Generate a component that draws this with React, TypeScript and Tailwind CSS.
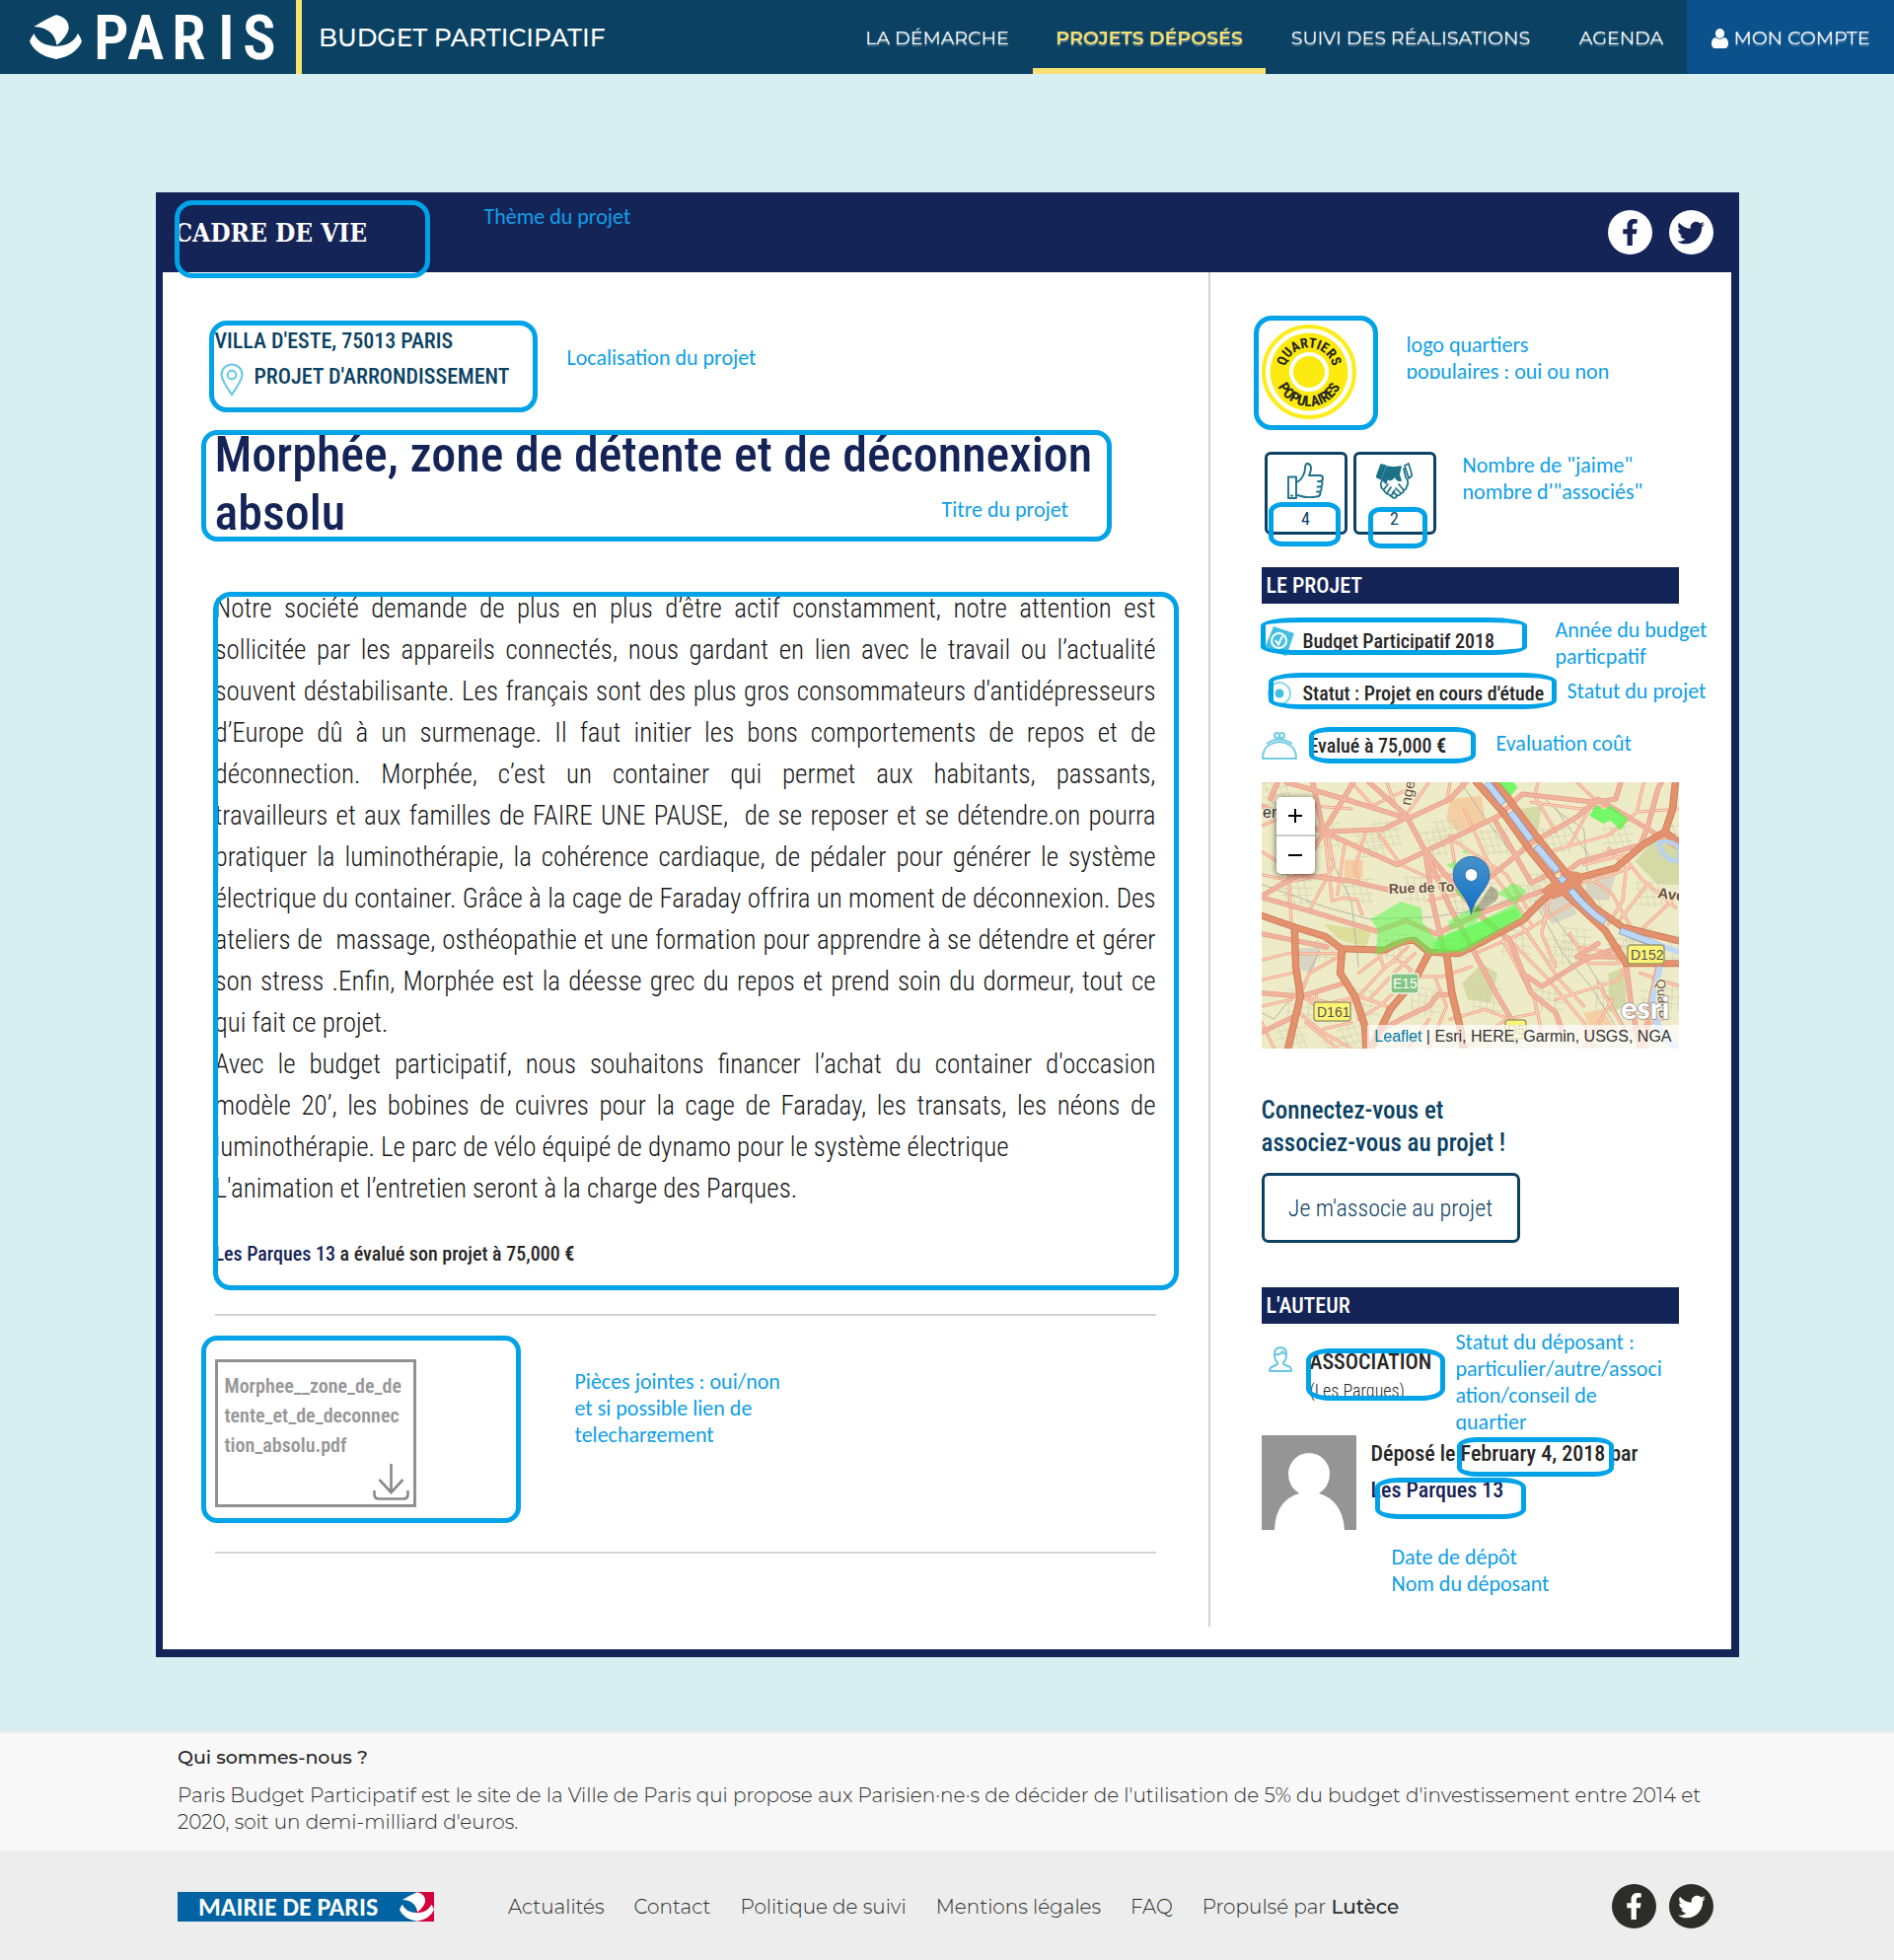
import React from "react";
import { FaFacebookF, FaTwitter } from "react-icons/fa";

const COND = "font-['Roboto_Condensed','Liberation_Sans',sans-serif]";
const MONT = "font-['Montserrat','Inter',sans-serif]";

function Mark({ className }: { className: string }) {
  return <span aria-hidden="true" className={"pointer-events-none absolute border-[5px] border-[#00a2e8] " + className} />;
}

function Note({ className, children }: { className: string; children: React.ReactNode }) {
  return (
    <div
      className={
        "absolute overflow-hidden whitespace-nowrap font-['Carlito','Lato',sans-serif] text-[22px] leading-[27px] font-normal text-[#0f9fe6] " +
        className
      }
    >
      {children}
    </div>
  );
}

function Ship({ className }: { className: string }) {
  return (
    <svg viewBox="0 0 53 45" className={className} fill="currentColor" aria-hidden="true">
      <path d="M4.5 12 Q17 4 27 0 Q40 3 39.7 14 Q38 22 27.5 31 Q25 13 4.5 12Z" />
      <path d="M4.5 19 Q9 31 27 32 Q44 31 48.8 19 Q51 21 53 27 Q47 41 27 45 Q6 41 0 27 Q2 22 4.5 19Z" />
    </svg>
  );
}

const navItems = [
  { label: "LA DÉMARCHE", width: "w-[194px]", active: false },
  { label: "PROJETS DÉPOSÉS", width: "w-[236px]", active: true },
  { label: "SUIVI DES RÉALISATIONS", width: "w-[294px]", active: false },
  { label: "AGENDA", width: "w-[133px]", active: false },
];

function Header() {
  return (
    <header className={"flex h-[75px] items-stretch bg-[#0b4263] text-white " + MONT}>
      <a href="#" className="flex items-center pl-[30px]" aria-label="Paris">
        <Ship className="h-[45px] w-[53px]" />
        <svg viewBox="0 0 200 75" className="ml-3 h-[75px] w-[200px] font-['Roboto_Condensed',sans-serif]" fill="currentColor" fontSize="63" fontWeight="600">
          <text x="0" y="60">P</text>
          <text x="34" y="60">A</text>
          <text x="79" y="60">R</text>
          <text x="126" y="60">I</text>
          <text x="151" y="60">S</text>
        </svg>
      </a>
      <div className="ml-[5px] w-[6px] bg-[#f8e073]" />
      <a href="#" className="flex items-center pt-[2px] pl-[17px] text-[25px] font-medium">BUDGET PARTICIPATIF</a>
      <nav className="ml-auto flex text-[19px] [text-shadow:0_2px_0_rgba(255,255,255,0.25)]">
        {navItems.map((n) => (
          <a
            key={n.label}
            href="#"
            className={
              "flex items-center justify-center whitespace-nowrap pt-[3px] " +
              n.width +
              (n.active ? " border-b-[6px] border-[#f8e073] pt-[9px] font-semibold text-[#f8e073]" : "")
            }
          >
            {n.label}
          </a>
        ))}
        <a href="#" className="flex w-[210px] items-center justify-center gap-[6px] bg-[#0b528c] pt-[3px]">
          <svg viewBox="0 0 17 20" className="h-5 w-[17px]" fill="currentColor" aria-hidden="true">
            <ellipse cx="8.500" cy="5" rx="4.600" ry="5" />
            <path d="M4 9 Q8.500 12.500 13 9 Q17 10 17 15 Q17 20 13 20 H4 Q0 20 0 15 Q0 10 4 9Z" />
          </svg>
          MON COMPTE
        </a>
      </nav>
    </header>
  );
}

function Social({ circle, gap }: { circle: string; gap: string }) {
  const base = "flex size-[45px] items-center justify-center rounded-full " + circle;
  return (
    <div className={"flex " + gap}>
      <a href="#" aria-label="Facebook" className={base}><FaFacebookF className="size-[27px]" /></a>
      <a href="#" aria-label="Twitter" className={base}><FaTwitter className="size-[28px]" /></a>
    </div>
  );
}

const lines: [string, boolean][] = [
  ["Notre société demande de plus en plus d’être actif constamment, notre attention est", true],
  ["sollicitée par les appareils connectés, nous gardant en lien avec le travail ou l’actualité", true],
  ["souvent déstabilisante. Les français sont des plus gros consommateurs d'antidépresseurs", true],
  ["d’Europe dû à un surmenage. Il faut initier les bons comportements de repos et de", true],
  ["déconnection. Morphée, c’est un container qui permet aux habitants, passants,", true],
  ["travailleurs et aux familles de FAIRE UNE PAUSE,\u00a0 de se reposer et se détendre.on pourra", true],
  ["pratiquer la luminothérapie, la cohérence cardiaque, de pédaler pour générer le système", true],
  ["électrique du container. Grâce à la cage de Faraday offrira un moment de déconnexion. Des", true],
  ["ateliers de\u00a0 massage, osthéopathie et une formation pour apprendre à se détendre et gérer", true],
  ["son stress .Enfin, Morphée est la déesse grec du repos et prend soin du dormeur, tout ce", true],
  ["qui fait ce projet.", false],
  ["Avec le budget participatif, nous souhaitons financer l’achat du container d'occasion", true],
  ["modèle 20’, les bobines de cuivres pour la cage de Faraday, les transats, les néons de", true],
  ["luminothérapie. Le parc de vélo équipé de dynamo pour le système électrique", false],
  ["L'animation et l’entretien seront à la charge des Parques.", false],
];

function Article() {
  return (
    <article className={"min-w-0 flex-1 px-[53px] pt-[52px] " + COND}>
      <div className="relative text-[22px] leading-9 font-medium text-[#0b4263]">
        <p>VILLA D'ESTE, 75013 PARIS</p>
        <p className="flex h-9 items-center">
          <svg viewBox="0 0 24 34" className="mt-[6px] mr-[11px] ml-[5px] h-[34px] w-6 shrink-0" fill="none" stroke="#6cc9e2" strokeWidth="2.200" aria-hidden="true">
            <path d="M12 32 Q2 18 1.500 12 A10.500 10.500 0 0 1 22.500 12 Q22 18 12 32Z" />
            <circle cx="12" cy="12" r="4.300" />
          </svg>
          PROJET D'ARRONDISSEMENT
        </p>
        <Mark className="-top-[3px] -left-[6px] h-[93px] w-[333px] rounded-[18px]" />
        <Note className="top-[21px] left-[357px]">Localisation du projet</Note>
      </div>

      <div className="relative mt-8">
        <h1 className="text-[50px] leading-[59px] font-medium text-[#152457]">Morphée, zone de détente et de déconnexion<br />absolu</h1>
        <Mark className="top-1 -left-[14px] h-[113px] w-[923px] rounded-[16px]" />
        <Note className="top-[71px] left-[737px]">Titre du projet</Note>
      </div>

      <div className="relative mt-[46px]">
        <div className="text-[27px] leading-[42px] font-light text-[#161616]">
          {lines.map(([t, full]) => (
            <span key={t} className={full ? "block [text-align-last:justify]" : "block"}>{t}</span>
          ))}
        </div>
        <p className="mt-[30px] text-[20px] leading-[30px] font-medium text-[#262626]">
          <a href="#" className="text-[#152457]">Les Parques 13</a> a évalué son projet à 75,000 <b>€</b>
        </p>
        <Mark className="top-1 -right-[23px] -bottom-[22px] -left-[2px] rounded-[18px]" />
      </div>

      <hr className="mt-[46px] border-t-2 border-[#d3d3d3]" />
      <div className="relative mt-11">
        <a href="#" className="flex h-[150px] w-[204px] flex-col justify-between border-[3px] border-[#919191] px-[7px] pt-[9px] text-[20px] leading-[30px] font-semibold text-[#979797]">
          <span>Morphee__zone_de_de<br />tente_et_de_deconnec<br />tion_absolu.pdf</span>
          <svg viewBox="0 0 37 37" className="-mr-[3px] mb-1 h-[37px] w-[37px] self-end" fill="none" stroke="#8a8a8a" strokeWidth="2.600" aria-hidden="true">
            <path d="M18.500 0V28 M6.500 16L18.500 29L30.500 16" />
            <path d="M1.500 27V32Q2 35.500 6 35.500H31Q35 35.500 35.500 32V27" />
          </svg>
        </a>
        <Mark className="-top-6 -left-[14px] h-[190px] w-[324px] rounded-[16px]" />
        <Note className="top-[9px] left-[365px] h-[75px]">Pièces jointes : oui/non<br />et si possible lien de<br />telechargement</Note>
      </div>
      <hr className="mt-[45px] border-t-2 border-[#d3d3d3]" />
    </article>
  );
}

const motorways = [
  "M775 39L850 130L930 250L1025 375L1140 490L1200 590",
  "M830 39L880 110L960 225L1040 330L1110 420L1190 480L1350 522",
  "M165 445L260 480L345 508L390 545L515 550Q560 520 600 520L640 556L725 560L800 520L905 460L965 395Q1000 360 1070 328L1170 300L1250 228L1310 190L1332 120L1340 39",
  "M1310 190L1350 222",
  "M258 480L262 600L275 690L255 780L240 849",
  "M393 545L388 620L430 690L458 780L462 849",
  "M640 558L600 640L530 730L475 849",
  "M690 560L705 680L730 790L738 849",
  "M1200 590H1350",
];
const avenues = [
  "M165 110L340 190L550 290L630 250L840 140L905 75L1110 100L1170 90L1185 39",
  "M235 39L400 90L580 150L700 90L745 39",
  "M340 190L510 182L580 145", "M310 39L340 190L270 320L165 385", "M340 190L400 85L425 39", "M210 39L190 90",
  "M470 39L575 140L630 250L700 420L760 540L830 680L890 790",
  "M630 250L650 400L682 550", "M165 390L300 430L490 492", "M270 320L420 340L540 370",
  "M640 260L780 440L870 520L930 680L1000 740L1020 800", "M830 160L890 270L930 345L1010 305",
  "M810 330L930 225L1060 145L1120 90L1260 180L1350 240", "M1260 180L1240 230L1070 280L1020 320",
  "M1260 180L1290 60L1300 39", "M165 680L280 690L400 650", "M490 800L560 760L640 720L665 685H710",
  "M780 440L960 370", "M490 492L575 460L660 500L780 440", "M165 500L350 540", "M1200 590L1215 720L1240 849", "M1170 570L1060 570L1120 530",
  "M1290 600L1270 700L1250 849", "M920 630L960 660L1080 580L1180 540", "M165 800L260 750",
];
const streets = [
  "M345 200L365 400L395 390L435 395L450 440", "M300 430L370 290L350 190", "M420 39L480 110L580 60", "M520 39L545 110L575 140L640 39",
  "M165 250L240 300L250 480", "M400 230L380 380", "M170 170L300 110L420 120", "M460 190L430 300L440 340", "M500 200L560 290L640 330L700 320",
  "M700 200L720 330", "M740 120L790 240L830 330L930 470", "M700 210L860 320L930 440", "M870 520L980 640L1080 770L1110 849",
  "M850 520L900 620L940 700L960 800", "M900 470L960 560L1010 640L1080 720", "M770 560L900 500L1010 430L1060 400", "M760 600L680 630L610 630",
  "M500 560L510 600L550 580L590 610L560 660L500 720L440 760", "M580 540L500 620L440 690L380 740", "M600 560L540 620L470 700", "M440 620L500 570",
  "M280 690L360 710L440 690L520 720", "M270 740L340 800L420 849", "M290 770L380 849", "M340 790L420 770", "M400 560L300 620L270 700", "M320 680L320 720L280 690",
  "M700 39L690 100", "M950 39L940 80L1000 190", "M1060 39L1110 90L1040 230", "M930 100L1070 120L1150 110", "M980 250L1150 200L1230 130",
  "M1080 290L1200 260", "M1190 260L1240 330L1340 420", "M1150 240L1200 300L1190 400L1150 470", "M1260 350L1180 460", "M1060 350L1160 320L1210 300",
  "M1100 330L1160 380L1220 490", "M1330 400L1230 500", "M980 400L960 500L1000 600", "M1070 540L1170 560L1180 590H1090L1040 500",
  "M740 849L860 760L950 740", "M700 760L800 730L870 760", "M640 849L690 720L660 640", "M580 849L640 760", "M1000 700L1180 640L1200 590",
  "M1080 849L1160 700", "M1120 650L1200 800L1300 760", "M1240 620L1350 660", "M165 580L240 560L380 560", "M165 640L250 620",
  "M165 720L250 700", "M200 849L165 770", "M640 400L720 380L800 330", "M1250 39L1230 130L1350 120", "M165 320L250 340L350 320",
];
const rails = ["M730 39L800 150L930 330", "M960 80L1020 140L1080 180L1090 310", "M1000 120L1100 270", "M940 400L1020 560L1100 660L1180 800", "M960 400L1060 540L1130 660L1200 790", "M165 350L350 420L470 455L640 450L800 425L900 380", "M330 550L290 640L200 760L165 740", "M360 270L420 400L440 600"];

function mesh() {
  const out: string[] = [];
  for (let i = 0; i < 44; i++) {
    const x = 165 + ((i * 271) % 1180);
    const y = 45 + ((i * 157) % 790);
    const a = (i % 5) * 9 - 18;
    for (let k = 0; k < 4; k++) out.push(`M${x + k * 19} ${y + a}l${14 - a} 74`, `M${x - 6} ${y + k * 22}l86 ${a}`);
  }
  return out.join("");
}

function MapDrawing() {
  return (
    <svg viewBox="0 0 423 270" preserveAspectRatio="xMidYMid slice" className="block h-full w-full font-['Liberation_Sans',sans-serif]" aria-hidden="true">
      <rect width="423" height="270" fill="#eeebc9" />
      <g transform="scale(.357 .3333) translate(-165 -39)" fill="none" strokeLinejoin="round" strokeLinecap="round">
        <g fill="#d5d9a5">
          <path d="M1225 280L1290 200L1350 230V350L1290 350Z" /><path d="M735 650L790 590L835 620L815 710L750 700Z" />
          <path d="M900 120L960 110L950 190L900 170Z" /><path d="M1150 620L1200 600L1200 720L1150 740Z" /><path d="M340 470L480 490L460 540L390 520Z" fill="#dede9b" />
        </g>
        <g fill="#f5cfa4"><path d="M700 90L790 80L800 160L720 190L690 150Z" /><path d="M400 275H452V330H400Z" /><path d="M1080 740L1130 730L1170 790L1100 800Z" /><path d="M850 85L870 70L890 100Z" /></g>
        <g fill="#d8d5c4"><path d="M940 400L1040 385L1060 440L990 470Z" /><path d="M1090 330L1170 320L1150 400L1080 390Z" /><path d="M270 545L330 540L310 620L275 610Z" /></g>
        <path d={mesh()} stroke="#d2cfae" strokeWidth="2" />
        {rails.map((d) => <path key={d} d={d} stroke="#aaa997" strokeWidth="2.500" strokeDasharray="14 3" />)}
        {streets.map((d) => <path key={d} d={d} stroke="#f3a588" strokeWidth="9" />)}
        {streets.map((d) => <path key={d + "i"} d={d} stroke="#fbe0cd" strokeWidth="3" />)}
        {avenues.map((d) => <path key={d} d={d} stroke="#e79d84" strokeWidth="15" />)}
        {avenues.map((d) => <path key={d + "i"} d={d} stroke="#f0b39d" strokeWidth="11" />)}
        {motorways.map((d) => <path key={d} d={d} stroke="#cd7a58" strokeWidth="21" />)}
        {motorways.map((d) => <path key={d + "i"} d={d} stroke="#e4916d" strokeWidth="16" />)}
        <path d="M955 370Q1000 330 1045 310Q1090 310 1075 345Q1050 380 990 395Z" fill="#e4916d" />
        <g stroke="#8f9cb4" strokeWidth="22" strokeLinecap="butt"><path d="M805 39L852 105M872 130L930 215M945 232L1005 310M1012 328L1025 342M1042 365Q1085 425 1140 465M1182 490L1285 532" /></g>
        <g stroke="#bcd6f6" strokeWidth="17" strokeLinecap="butt"><path d="M805 41L851 103M873 132L929 213M946 234L1004 308M1013 329L1024 341M1043 367Q1086 425 1139 464M1184 491L1350 556M1296 600L1275 700Q1280 800 1345 849" /></g>
        <path d="M1290 225Q1330 210 1350 240V280Q1310 280 1290 225Z" stroke="#b5d2f2" strokeWidth="12" />
        <g fill="#4dfb46" fillOpacity=".5">
          <path d="M475 455L560 402L618 420L622 465L655 512L770 470L885 408L910 448L740 555L640 562L592 518L520 550L488 565L495 490Z" />
          <path d="M835 378L880 345L917 368L885 408Z" /><path d="M695 462L780 410L790 440L770 470L700 490Z" />
          <path d="M690 290L715 278V310ZM732 250L745 245L755 262ZM712 370L740 360V395Z" />
        </g>
        <path d="M1115 108L1135 122L1155 110L1205 150L1185 185L1155 155L1135 165L1095 140ZM838 39H880L892 55L872 80Z" fill="#4dfb46" fillOpacity=".75" />
        <path d="M650 530L720 490L770 470L885 420L900 445L735 550L660 555Z" fill="#4dfb46" fillOpacity=".5" />
        <path d="M765 435L815 355Q850 370 830 400L790 430Z" fill="#000" fillOpacity=".25" />
      </g>
      <g fontSize="15" fill="#6b5145" stroke="#f3eed2" strokeWidth="2.500" paintOrder="stroke">
        <text x="1" y="36" fill="#333" fontSize="16">er</text>
        <text x="129" y="113" fontWeight="700" fontSize="14" transform="rotate(-2 129 113)">Rue de To</text>
        <text x="401" y="117" fontWeight="700" transform="rotate(8 401 117)">Ave</text>
        <text x="151" y="24" transform="rotate(-80 151 24)">nge</text>
        <text x="400" y="200" fontSize="13" transform="rotate(85 400 200)">Quai B</text>
      </g>
      <g strokeWidth="1.500" fontSize="14">
        <rect x="371" y="165" width="37" height="19" rx="3" fill="#fdf375" stroke="#9a9a6b" /><text x="374" y="180" fill="#555">D152</text>
        <rect x="53" y="223" width="37" height="19" rx="3" fill="#fdf375" stroke="#9a9a6b" /><text x="56" y="238" fill="#555">D161</text>
        <rect x="247" y="241" width="21" height="19" rx="3" fill="#fdf375" stroke="#9a9a6b" /><text x="249" y="256" fill="#777">D5</text>
        <rect x="131" y="194" width="28" height="20" rx="3" fill="#82c584" stroke="#eaf5e4" /><text x="133" y="209" fill="#fff">E15</text>
      </g>
      <text x="364" y="240" fontSize="33" fontWeight="700" fill="#fff" stroke="#8f8f8f" strokeWidth="1.500" paintOrder="stroke" className="font-['Carlito',sans-serif]">esri</text>
      <path d="M212.500 134 C210 116 194 108 194 94 A18.500 18.500 0 0 1 231 94 C231 108 215 116 212.500 134Z" fill="url(#pin)" stroke="#2a6ca8" />
      <circle cx="212.500" cy="94" r="6.500" fill="#fff" stroke="#2a6ca8" />
      <defs><linearGradient id="pin" x1="0" y1="0" x2="0" y2="1"><stop offset="0" stopColor="#4593cb" /><stop offset="1" stopColor="#126fc6" /></linearGradient></defs>
    </svg>
  );
}

function LeafletMap() {
  const btn = "flex w-[39px] items-center justify-center bg-white text-black";
  return (
    <div className="relative mt-[11px] h-[270px] overflow-hidden font-['Liberation_Sans',sans-serif]">
      <MapDrawing />
      <div className="absolute top-[15px] left-[15px] flex flex-col overflow-hidden rounded-[5px] shadow-[0_1px_6px_rgba(0,0,0,0.65)]">
        <button aria-label="Zoom avant" className={btn + " h-10 border-b-2 border-[#ccc]"}>
          <svg viewBox="0 0 14 14" className="size-[14px]" stroke="#000" strokeWidth="2"><path d="M0 7H14M7 0V14" /></svg>
        </button>
        <button aria-label="Zoom arrière" className={btn + " h-[38px]"}>
          <svg viewBox="0 0 14 14" className="size-[14px]" stroke="#000" strokeWidth="2"><path d="M0 7H14" /></svg>
        </button>
      </div>
      <div className="absolute right-0 bottom-0 bg-white/70 px-[7px] text-[16px] leading-6 text-[#333]">
        <a href="#" className="text-[#0078a8]">Leaflet</a> | Esri, HERE, Garmin, USGS, NGA
      </div>
    </div>
  );
}

function QuartiersLogo() {
  return (
    <svg viewBox="0 0 96 96" className="block size-24 font-['Roboto_Condensed',sans-serif]" role="img" aria-label="Quartiers populaires">
      <circle cx="48" cy="48" r="46" fill="#fff" stroke="#fcec1c" strokeWidth="4" />
      <circle cx="48" cy="48" r="39.500" fill="#fcea10" />
      <circle cx="48" cy="48" r="18" fill="none" stroke="#fff" strokeWidth="4" />
      <path id="arcTop" d="M23.500 48A24.500 24.500 0 0 1 72.500 48" fill="none" />
      <path id="arcBottom" d="M13 48A35 35 0 0 0 83 48" fill="none" />
      <g fontWeight="700" fill="#26261e" textAnchor="middle">
        <text fontSize="14"><textPath href="#arcTop" startOffset="50%">QUARTIERS</textPath></text>
        <text fontSize="15"><textPath href="#arcBottom" startOffset="50%">POPULAIRES</textPath></text>
      </g>
    </svg>
  );
}

function ThumbIcon() {
  return (
    <svg viewBox="0 0 37 37" className="size-[37px]" fill="none" stroke="#1b7288" strokeWidth="1.900" strokeLinejoin="round" strokeLinecap="round" aria-hidden="true">
      <path d="M1 14.500H9V36H1Z M4 33.500H5" />
      <path d="M9 20Q14 18 16 13Q18 9.500 18 6Q18 1 20.500 1Q24 1.500 24 6Q24 9 22 13H33Q36 13 36 16Q36 19 33 19H31M35 18Q36.500 24 33 24.500H30.500M34.500 24Q35.500 29 32 29.500H30M33.500 29.500Q34 34 30 34.500Q20 36 14 34Q11 33 9 33" />
    </svg>
  );
}

function HandshakeIcon() {
  return (
    <svg viewBox="0 0 37 37" className="size-[37px]" fill="none" stroke="#1b7288" strokeWidth="1.700" strokeLinejoin="round" strokeLinecap="round" aria-hidden="true">
      <path d="M5 2L9.500 3L4.500 16.500L.5 14.500Z" fill="#1b7288" />
      <path d="M11 4L18 5L25 4L23 12L25 18Q21 19 19 13Q15 20 11 16L10 21L6 17Z" fill="#1b7288" />
      <path d="M6 18Q3 24 7 27L10 31L14 33L18 36Q21 36 21 33Q24 34 25 31Q28 31 28 28Q31 27 31 24Q34 20 30 15L28 6M29 3L33 1L36.500 13L33 16Z" />
      <path d="M8 27L12 22M11 31L15 25M15 34L19 28M21 33L17 30M25 31L20 26M28 28L23 22" />
    </svg>
  );
}

function SectionBar({ children }: { children: React.ReactNode }) {
  return <h2 className="bg-[#152457] pl-[5px] text-[22px] leading-[37px] font-medium text-white">{children}</h2>;
}

function Counter({ icon, count }: { icon: React.ReactNode; count: number }) {
  return (
    <button className="flex h-[84px] w-[84px] flex-col items-center rounded-[6px] border-[3px] border-[#0b4263] pt-2 text-[18px] leading-6 text-[#0b4263]">
      {icon}
      <span className="mt-2">{count}</span>
    </button>
  );
}

function Aside() {
  const row = "relative flex h-[53px] items-center text-[20px] leading-[30px] font-medium text-[#262626]";
  return (
    <aside className={"w-[530px] shrink-0 border-l-2 border-[#d3d3d3] pt-[53px] pr-[53px] pb-[98px] pl-[52px] " + COND}>
      <div className="relative">
        <QuartiersLogo />
        <Mark className="-top-[9px] -left-2 h-[116px] w-[126px] rounded-[18px]" />
        <Note className="top-[7px] left-[147px] h-[48px]">logo quartiers<br />populaires : oui ou non</Note>
      </div>

      <div className="relative mt-[33px] flex gap-[6px] pl-[3px]">
        <Counter icon={<ThumbIcon />} count={4} />
        <Counter icon={<HandshakeIcon />} count={2} />
        <Mark className="top-[51px] left-[7px] h-[45px] w-[73px] rounded-[14px_/_10px]" />
        <Mark className="top-[56px] left-[108px] h-[42px] w-[60px] rounded-[12px_/_10px]" />
        <Note className="top-0 left-[204px]">Nombre de "jaime"<br />nombre d'"associés"</Note>
      </div>

      <div className="mt-[33px]"><SectionBar>LE PROJET</SectionBar></div>
      <div className="mt-[11px]">
        <div className={row}>
          <svg viewBox="0 0 34 30" className="mr-2 h-[30px] w-[34px]" aria-hidden="true">
            <path d="M12 0L33 7L25 30L3 22Z" fill="#45bfe0" />
            <circle cx="17.500" cy="14.500" r="7.500" fill="none" stroke="#fff" strokeWidth="2" />
            <path d="M14 14L17 18.500L21 10" fill="none" stroke="#fff" strokeWidth="2" />
          </svg>
          Budget Participatif 2018
          <Mark className="top-[3px] -left-px h-[38px] w-[270px] rounded-[40px_/_8px]" />
          <Note className="top-[2px] left-[298px]">Année du budget<br />particpatif</Note>
        </div>
        <div className={row}>
          <svg viewBox="0 0 24 24" className="mr-3 ml-[6px] size-6" aria-hidden="true">
            <circle cx="12" cy="12" r="11" fill="none" stroke="#8fd6e9" strokeWidth="2" />
            <circle cx="12" cy="12" r="4.500" fill="#45bfe0" />
          </svg>
          Statut : Projet en cours d'étude
          <Mark className="top-[6px] left-[7px] h-[37px] w-[292px] rounded-[34px_/_9px]" />
          <Note className="top-[11px] left-[310px]">Statut du projet</Note>
        </div>
        <div className={row}>
          <svg viewBox="0 0 36 28" className="mr-3 h-7 w-9" fill="none" stroke="#72cce3" strokeWidth="2" strokeLinejoin="round" aria-hidden="true">
            <path d="M1 27Q1 17 8 13Q18 7 28 13Q35 17 35 27Z" />
            <path d="M5 12Q17 3 31 12" />
            <circle cx="15.500" cy="3.500" r="2.500" /><circle cx="20.500" cy="3.500" r="2.500" />
          </svg>
          <span>Evalué à 75,000 <b>€</b></span>
          <Mark className="top-2 left-12 h-[37px] w-[169px] rounded-[22px_/_9px]" />
          <Note className="top-[11px] left-[238px]">Evaluation coût</Note>
        </div>
      </div>

      <LeafletMap />

      <p className="mt-[46px] text-[25px] leading-[33px] font-medium text-[#0b4263]">Connectez-vous et<br />associez-vous au projet !</p>
      <button className="mt-[14px] h-[71px] w-[262px] rounded-[7px] border-[3px] border-[#0b4263] text-[24px] font-light text-[#0b4263]">
        Je m'associe au projet
      </button>

      <div className="mt-[45px]"><SectionBar>L'AUTEUR</SectionBar></div>
      <div className="relative mt-[23px] flex items-start text-[#262626]">
        <svg viewBox="0 0 24 26" className="mr-[18px] ml-[7px] h-[26px] w-6" fill="none" stroke="#66c8e0" strokeWidth="2" strokeLinejoin="round" aria-hidden="true">
          <path d="M6 8Q6 1 12 1Q18 1 18 8Q18 14 15 16V18L22 21Q23 23 23 25H1Q1 22 3 21L9 18V16Q6 14 6 8Z" />
          <path d="M6 8Q12 9 14 5Q15 8 18 8" />
        </svg>
        <p>
          <span className="block text-[22px] leading-8 font-medium">ASSOCIATION</span>
          <span className="block text-[18px] leading-[26px] font-light">(Les Parques)</span>
        </p>
        <Mark className="top-[2px] left-[45px] h-[53px] w-[141px] rounded-[24px_/_12px]" />
        <Note className="-top-[18px] left-[197px] h-[103px]">Statut du déposant :<br />particulier/autre/associ<br />ation/conseil de<br />quartier</Note>
      </div>

      <div className="relative mt-8 flex text-[22px] leading-[37px] font-medium text-[#262626]">
        <svg viewBox="0 0 96 96" className="mr-[15px] size-24 shrink-0" role="img" aria-label="Les Parques 13">
          <rect width="96" height="96" fill="#959595" />
          <path d="M13 96Q14 66 38 59Q27 52 27 39A21 21 0 0 1 69 39Q69 52 58 59Q82 66 84 96Z" fill="#fff" />
        </svg>
        <p>Déposé le February 4, 2018 par<br /><a href="#" className="text-[#152457]">Les Parques 13</a></p>
        <Mark className="top-[2px] left-[198px] h-10 w-[159px] rounded-[20px_/_9px]" />
        <Mark className="top-[43px] left-[115px] h-[42px] w-[153px] rounded-[24px_/_10px]" />
        <Note className="top-[110px] left-[132px]">Date de dépôt<br />Nom du déposant</Note>
      </div>
    </aside>
  );
}

const footerLinks = ["Actualités", "Contact", "Politique de suivi", "Mentions légales", "FAQ"];

function Footer() {
  return (
    <footer className={"text-[#2b2b2b] " + MONT}>
      <div className="border-t-2 border-[#ededed] bg-[#f8f8f8] px-[180px] pt-[11px] pb-[15px] text-[19px] leading-[27px]">
        <h2 className="font-medium text-[#262626]">Qui sommes-nous ?</h2>
        <p className="mt-3 text-[20px] font-light">
          Paris Budget Participatif est le site de la Ville de Paris qui propose aux Parisien·ne·s de décider de l'utilisation de 5% du budget d'investissement entre 2014 et 2020, soit un demi-milliard d'euros.
        </p>
      </div>
      <div className="flex h-[111px] items-center bg-[#ededed] pt-[2px] pr-[183px] pl-[180px]">
        <a href="#" className="flex h-[30px] w-[260px] items-center bg-[linear-gradient(to_right,#0063a3_93%,#d4003b_93%)] pl-[21px] font-['Carlito',sans-serif] text-[26px] leading-[30px] font-bold text-white">
          MAIRIE DE PARIS
          <Ship className="ml-auto h-[30px] w-[35px]" />
        </a>
        <nav className="ml-[75px] flex gap-[30px] text-[20px] font-light whitespace-nowrap">
          {footerLinks.map((l) => <a key={l} href="#">{l}</a>)}
          <span>Propulsé par <a href="#" className="font-medium">Lutèce</a></span>
        </nav>
        <div className="ml-auto"><Social circle="bg-[#2c2c2b] text-white" gap="gap-[13px]" /></div>
      </div>
    </footer>
  );
}

export default function App() {
  return (
    <div className="bg-[#d8eff1]">
      <Header />
      <main className="px-[157px] pt-[120px] pb-[75px]">
        <div className="mx-auto max-w-[1605px] bg-[#152457] pr-2 pb-2 pl-[7px]">
          <div className="relative flex h-[81px] items-center justify-between pr-[18px] pl-3">
            <div className="pt-[2px] font-['DejaVu_Serif_Condensed','DejaVu_Serif',serif] text-[26px] font-bold text-white">CADRE DE VIE</div>
            <Mark className="top-2 left-3 h-[79px] w-[259px] rounded-[18px]" />
            <Note className="top-[11px] left-[326px]">Thème du projet</Note>
            <Social circle="bg-white text-[#152457]" gap="gap-[17px]" />
          </div>
          <div className="flex bg-white pb-[23px]">
            <Article />
            <Aside />
          </div>
        </div>
      </main>
      <Footer />
    </div>
  );
}
